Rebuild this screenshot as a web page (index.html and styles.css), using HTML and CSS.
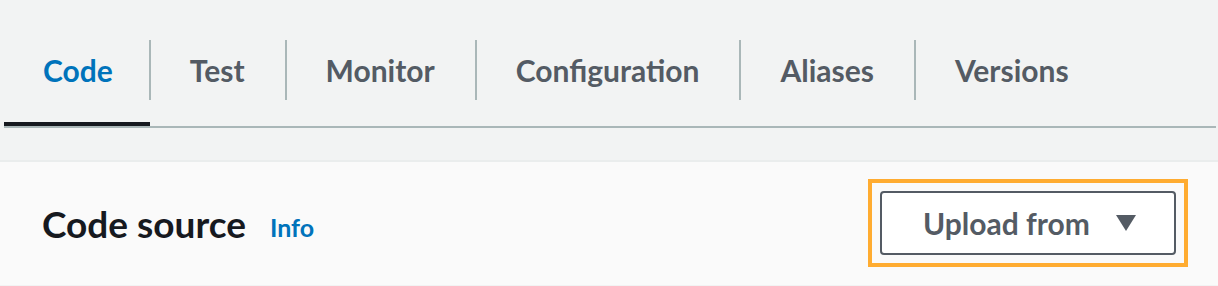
FILE: index.html
```html
<!DOCTYPE html>
<html lang="en">
<head>
    <meta charset="UTF-8">
    <title>Function</title>
    <link rel="stylesheet" href="styles.css">
</head>
<body>
    <nav class="tabs">
        <a href="#" class="tab active">Code</a>
        <a href="#" class="tab">Test</a>
        <a href="#" class="tab">Monitor</a>
        <a href="#" class="tab">Configuration</a>
        <a href="#" class="tab">Aliases</a>
        <a href="#" class="tab">Versions</a>
    </nav>

    <section class="panel">
        <div class="panel-header">
            <h2>Code source</h2>
            <a href="#" class="info">Info</a>
            <div class="highlight">
                <button class="upload-btn">
                    Upload from
                    <svg width="20" height="16" viewBox="0 0 20 16"><polygon points="0,0 20,0 10,16" fill="#545b64"/></svg>
                </button>
            </div>
        </div>
    </section>
</body>
</html>
```

FILE: styles.css
```css
* {
    margin: 0;
    padding: 0;
    box-sizing: border-box;
}

body {
    background: #f2f3f3;
    font-family: Lato, "Open Sans", sans-serif;
    width: 1218px;
    height: 286px;
    overflow: hidden;
}

.tabs {
    display: flex;
    margin: 0 2px 0 4px;
    padding-top: 40px;
    border-bottom: 2px solid #aab7b8;
}

.tab {
    display: block;
    padding: 0 41px 22px 40px;
    font-size: 30px;
    font-weight: 700;
    color: #545b64;
    text-decoration: none;
    border-bottom: 4px solid transparent;
    position: relative;
    line-height: 60px;
}

.tab + .tab::before {
    content: "";
    position: absolute;
    left: -1px;
    top: 0;
    height: 60px;
    border-left: 2px solid #aab7b8;
}

.tab.active {
    padding: 0 37px 22px 39px;
    color: #0073bb;
    border-bottom-color: #16191f;
}

.panel {
    margin-top: 32px;
    border-top: 2px solid #eaeded;
    background: #fafafa;
    height: 125px;
}

.panel-header {
    display: flex;
    align-items: center;
    padding: 17px 30px 0 42px;
}

h2 {
    font-size: 37px;
    font-weight: 700;
    color: #16191f;
}

.info {
    margin-left: 24px;
    margin-top: 8px;
    font-size: 25px;
    font-weight: 700;
    color: #0073bb;
    text-decoration: none;
}

.highlight {
    margin-left: auto;
    border: 4px solid #ffac31;
    padding: 8px;
}

.upload-btn {
    display: flex;
    align-items: center;
    gap: 26px;
    width: 296px;
    height: 64px;
    padding-left: 41px;
    background: #fff;
    border: 2px solid #545b64;
    border-radius: 4px;
    font-family: Lato, "Open Sans", sans-serif;
    font-size: 30px;
    font-weight: 700;
    color: #545b64;
}
```
